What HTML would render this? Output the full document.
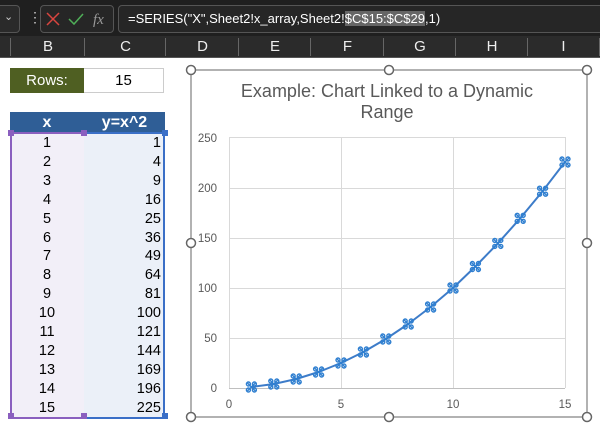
<!DOCTYPE html>
<html><head><meta charset="utf-8"><style>
body{margin:0;width:600px;height:430px;overflow:hidden;background:#fff;font-family:"Liberation Sans",Arial,sans-serif;position:relative}
.a{position:absolute}
</style></head><body>
<div class="a" style="left:0;top:0;width:600px;height:36px;background:#1f1f1f"></div>
<div class="a" style="left:-6px;top:5px;width:24px;height:26px;border:1px solid #555;border-radius:4px;background:#2a2a2a"></div>
<div class="a" style="left:4px;top:10px;color:#ccc;font-size:11px">&#8964;</div>
<div class="a" style="left:28px;top:9px;color:#ccc;font-size:14px">&#8942;</div>
<div class="a" style="left:40px;top:5px;width:72px;height:26px;border:1px solid #555;border-radius:4px;background:#262626"></div>
<svg class="a" style="left:40px;top:5px" width="74" height="28">
<path d="M7 8 L19 20 M19 8 L7 20" stroke="#d9453f" stroke-width="1.5"/>
<path d="M29 14 L34 19 L43 9" stroke="#4fae58" stroke-width="1.5" fill="none"/>
<text x="53" y="19" font-family="Liberation Serif" font-style="italic" font-size="15" fill="#999">fx</text>
</svg>
<div class="a" style="left:118px;top:5px;width:490px;height:26px;border:1px solid #555;border-radius:4px;background:#262626"></div>
<div class="a" style="left:128px;top:11px;color:#fff;font-size:13px;white-space:nowrap">=SERIES("X",Sheet2!x_array,Sheet2!<span style="background:#666">$C$15:$C$29</span>,1)</div>
<div class="a" style="left:0;top:36px;width:600px;height:21px;background:#2b2b2b;border-bottom:1px solid #555"></div>
<div class="a" style="top:38px;left:0;width:600px;height:20px;color:#eee;font-size:15px">
<span class="a" style="left:10px;width:74px;text-align:center;border-left:1px solid #666;height:18px">B</span>
<span class="a" style="left:84px;width:81px;text-align:center;border-left:1px solid #666;height:18px">C</span>
<span class="a" style="left:165px;width:73px;text-align:center;border-left:1px solid #666;height:18px">D</span>
<span class="a" style="left:238px;width:72px;text-align:center;border-left:1px solid #666;height:18px">E</span>
<span class="a" style="left:310px;width:73px;text-align:center;border-left:1px solid #666;height:18px">F</span>
<span class="a" style="left:383px;width:72px;text-align:center;border-left:1px solid #666;height:18px">G</span>
<span class="a" style="left:455px;width:72px;text-align:center;border-left:1px solid #666;height:18px">H</span>
<span class="a" style="left:527px;width:71px;text-align:center;border-left:1px solid #666;border-right:1px solid #666;height:18px">I</span>
</div>
<div class="a" style="left:10px;top:68px;width:74px;height:25px;background:#4f5f22;color:#fff;font-size:15px;line-height:25px;text-align:center">Rows:</div>
<div class="a" style="left:84px;top:68px;width:79px;height:23px;border:1px solid #ccc;border-left:none;font-size:15px;line-height:24px;text-align:center">15</div>
<div class="a" style="left:10px;top:112px;width:155px;height:21px;background:#2f5e96;color:#fff;font-weight:bold;font-size:16px;line-height:21px">
<span class="a" style="left:0;width:74px;text-align:center">x</span><span class="a" style="left:74px;width:81px;text-align:center">y=x^2</span></div>
<div class="a" style="left:10px;top:132px;width:72px;height:283px;background:#f2eff8;border:2px solid #8a5fbf"></div>
<div class="a" style="left:84px;top:132px;width:79px;height:283px;background:#ebf0f8;border:2px solid #3a6fc7;border-left:none"></div>
<div class="a" style="left:8px;top:130px;width:6px;height:6px;background:#8a5fbf"></div>
<div class="a" style="left:81px;top:130px;width:6px;height:6px;background:#8a5fbf"></div>
<div class="a" style="left:162px;top:130px;width:6px;height:6px;background:#3a6fc7"></div>
<div class="a" style="left:8px;top:413px;width:6px;height:6px;background:#8a5fbf"></div>
<div class="a" style="left:81px;top:413px;width:6px;height:6px;background:#8a5fbf"></div>
<div class="a" style="left:162px;top:413px;width:6px;height:6px;background:#3a6fc7"></div>
<div class="a" style="left:10px;top:134px;width:155px;font-size:14.5px;line-height:18.9px">
<div style="display:flex"><span style="width:74px;text-align:center">1</span><span style="width:77px;text-align:right">1</span></div>
<div style="display:flex"><span style="width:74px;text-align:center">2</span><span style="width:77px;text-align:right">4</span></div>
<div style="display:flex"><span style="width:74px;text-align:center">3</span><span style="width:77px;text-align:right">9</span></div>
<div style="display:flex"><span style="width:74px;text-align:center">4</span><span style="width:77px;text-align:right">16</span></div>
<div style="display:flex"><span style="width:74px;text-align:center">5</span><span style="width:77px;text-align:right">25</span></div>
<div style="display:flex"><span style="width:74px;text-align:center">6</span><span style="width:77px;text-align:right">36</span></div>
<div style="display:flex"><span style="width:74px;text-align:center">7</span><span style="width:77px;text-align:right">49</span></div>
<div style="display:flex"><span style="width:74px;text-align:center">8</span><span style="width:77px;text-align:right">64</span></div>
<div style="display:flex"><span style="width:74px;text-align:center">9</span><span style="width:77px;text-align:right">81</span></div>
<div style="display:flex"><span style="width:74px;text-align:center">10</span><span style="width:77px;text-align:right">100</span></div>
<div style="display:flex"><span style="width:74px;text-align:center">11</span><span style="width:77px;text-align:right">121</span></div>
<div style="display:flex"><span style="width:74px;text-align:center">12</span><span style="width:77px;text-align:right">144</span></div>
<div style="display:flex"><span style="width:74px;text-align:center">13</span><span style="width:77px;text-align:right">169</span></div>
<div style="display:flex"><span style="width:74px;text-align:center">14</span><span style="width:77px;text-align:right">196</span></div>
<div style="display:flex"><span style="width:74px;text-align:center">15</span><span style="width:77px;text-align:right">225</span></div>
</div>
<svg class="a" style="left:0;top:0" width="600" height="430">
<defs><g id="m" fill="none" stroke="#2f7fd0" stroke-width="1.4"><path d="M-4 -4 L4 4 M4 -4 L-4 4"/><circle cx="-3" cy="-3" r="2"/><circle cx="3" cy="-3" r="2"/><circle cx="-3" cy="3" r="2"/><circle cx="3" cy="3" r="2"/></g></defs>
<rect x="191" y="70" width="396" height="347" fill="#fff" stroke="#666" stroke-width="1"/>
<g fill="#fff" stroke="#666" stroke-width="1.5">
<circle cx="191" cy="70" r="4.5"/><circle cx="389" cy="70" r="4.5"/><circle cx="587" cy="70" r="4.5"/>
<circle cx="191" cy="243" r="4.5"/><circle cx="587" cy="243" r="4.5"/>
<circle cx="191" cy="417" r="4.5"/><circle cx="389" cy="417" r="4.5"/><circle cx="587" cy="417" r="4.5"/></g>
<text x="387" y="97" text-anchor="middle" font-size="18" fill="#595959">Example: Chart Linked to a Dynamic</text>
<text x="387" y="118" text-anchor="middle" font-size="18" fill="#595959">Range</text>
<g stroke="#d9d9d9" stroke-width="1">
<path d="M229 137.5H565M229 188.5H565M229 238.5H565M229 288.5H565M229 338.5H565M341.5 137V388M453.5 137V388M565.5 137V388M229.5 137V388"/></g>
<path d="M229 388.5H565" stroke="#bfbfbf"/>
<g font-size="11.5" fill="#595959" text-anchor="end">
<text x="217" y="142">250</text><text x="217" y="192">200</text><text x="217" y="242">150</text><text x="217" y="292">100</text><text x="217" y="342">50</text><text x="217" y="392">0</text></g>
<g font-size="11.5" fill="#595959" text-anchor="middle">
<text x="229" y="408">0</text><text x="341" y="408">5</text><text x="453" y="408">10</text><text x="565" y="408">15</text></g>
<polyline fill="none" stroke="#3d7cc9" stroke-width="2" stroke-linejoin="round" points="251.4,387 273.8,384 296.2,379 318.6,372 341,363 363.4,352 385.8,339 408.2,324 430.6,307 453,288 475.4,266.5 497.8,243.4 520.2,218.3 542.6,191.2 565,162"/>
<use href="#m" x="251.4" y="387"/><use href="#m" x="273.8" y="384"/><use href="#m" x="296.2" y="379"/><use href="#m" x="318.6" y="372"/><use href="#m" x="341" y="363"/><use href="#m" x="363.4" y="352"/><use href="#m" x="385.8" y="339"/><use href="#m" x="408.2" y="324"/><use href="#m" x="430.6" y="307"/><use href="#m" x="453" y="288"/><use href="#m" x="475.4" y="266.5"/><use href="#m" x="497.8" y="243.4"/><use href="#m" x="520.2" y="218.3"/><use href="#m" x="542.6" y="191.2"/><use href="#m" x="565" y="162"/>
</svg>
</body></html>
